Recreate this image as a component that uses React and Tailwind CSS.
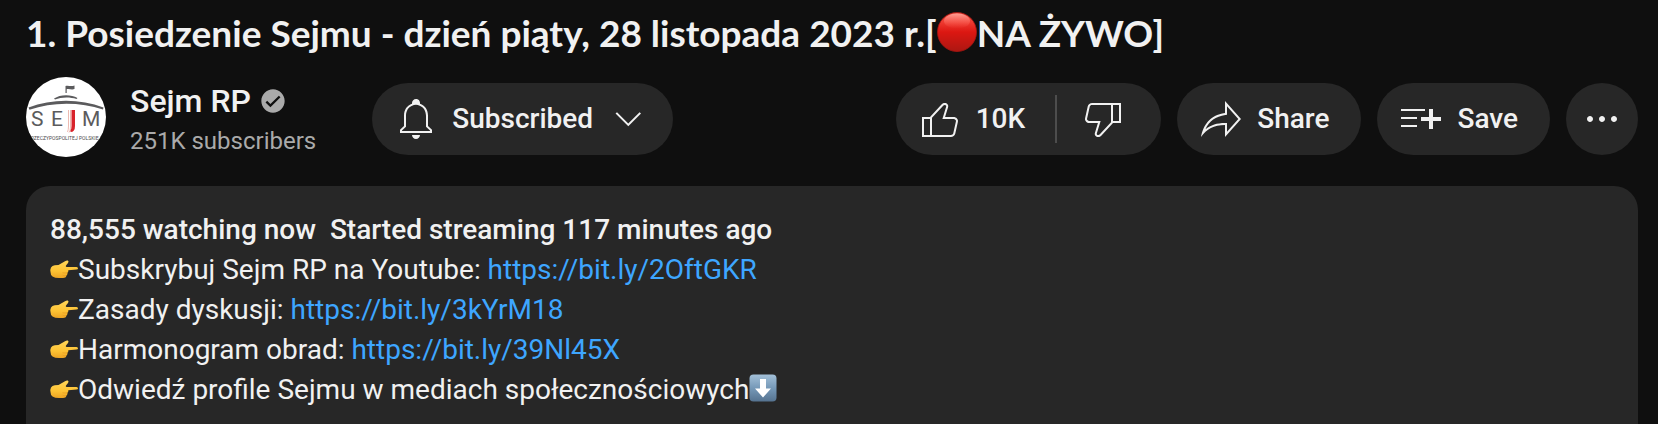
const LIKE = "M18.77,11h-4.23l1.52-4.94C16.38,5.03,15.54,4,14.38,4c-0.58,0-1.14,0.24-1.52,0.65L7,11H3v10h4h1h9.43c1.06,0,1.98-0.67,2.19-1.61l1.34-6C21.23,12.15,20.18,11,18.77,11z M7,20H4v-8h3V20z M19.98,13.17l-1.34,6C18.54,19.65,18.03,20,17.43,20H8v-8.61l5.6-6.06C13.79,5.12,14.08,5,14.38,5c0.26,0,0.5,0.11,0.63,0.3c0.07,0.1,0.15,0.26,0.09,0.47l-1.52,4.94L13.18,12h1.35h4.23c0.41,0,0.8,0.17,1.03,0.46C19.92,12.61,20.05,12.86,19.98,13.17z";
const DISLIKE = "M17,4h-1H6.57C5.5,4,4.59,4.67,4.38,5.61l-1.34,6C2.77,12.85,3.82,14,5.23,14h4.23l-1.52,4.94C7.62,19.97,8.46,21,9.62,21c0.58,0,1.14-0.24,1.52-0.65L17,14h4V4H17z M10.4,19.67C10.21,19.88,9.92,20,9.62,20c-0.26,0-0.5-0.11-0.63-0.3c-0.07-0.1-0.15-0.26-0.09-0.47l1.52-4.94l0.4-1.29H9.46H5.23c-0.41,0-0.8-0.17-1.03-0.46c-0.12-0.15-0.25-0.4-0.18-0.72l1.34-6C5.46,5.35,5.97,5,6.57,5H16v8.61L10.4,19.67z M20,13h-3V5h3V13z";
const SHARE = "M15,5.63L20.66,12L15,18.37V15v-1h-1c-3.96,0-7.14,1-9.75,3.09c1.84-4.07,5.11-6.4,9.89-7.1L15,9.86V9V5.63 M14,3v6C6.22,10.13,3.11,15.33,2,21c2.78-3.97,6.44-6,12-6v6l8-9L14,3z";
const SAVE = "M22,13h-4v4h-2v-4h-4v-2h4V7h2v4h4V13z M14,7H2v1h12V7z M2,12h8v-1H2V12z M2,16h8v-1H2V16z";
const MORE = "M7.5,12c0,0.83-0.67,1.5-1.5,1.5S4.5,12.83,4.5,12s0.67-1.5,1.5-1.5S7.5,11.17,7.5,12z M13.5,12c0,0.83-0.67,1.5-1.5,1.5s-1.5-0.67-1.5-1.5s0.67-1.5,1.5-1.5S13.5,11.17,13.5,12z M19.5,12c0,0.83-0.67,1.5-1.5,1.5s-1.5-0.67-1.5-1.5s0.67-1.5,1.5-1.5S19.5,11.17,19.5,12z";
const BELL = "M10,20h4c0,1.1-0.9,2-2,2S10,21.1,10,20z M20,17.35V19H4v-1.65l2-1.88v-5.15c0-2.92,1.56-5.22,4-5.98V3.96c0-1.42,1.49-2.5,2.99-1.76C13.64,2.52,14,3.23,14,3.96l0,0.39c2.44,0.75,4,3.06,4,5.98v5.15L20,17.35z M19,17.77l-2-1.88v-5.47c0-2.47-1.19-4.36-3.13-5.1c-1.26-0.53-2.64-0.5-3.84,0.03C8.15,6.11,7,7.99,7,10.42v5.47l-2,1.88V18h14V17.77z";
const CHEVRON = "M18,9.28l-6.35,6.35l-6.37-6.35l0.72-0.71l5.64,5.65l5.65-5.65z";
const VERIFIED = "M12,2C6.5,2,2,6.5,2,12c0,5.5,4.5,10,10,10s10-4.5,10-10C22,6.5,17.5,2,12,2z M9.8,17.3l-4.2-4.1L7,11.8l2.8,2.7L17,7.4l1.4,1.4L9.8,17.3z";

function Icon({ d, className = "size-12" }) {
  return (
    <svg viewBox="0 0 24 24" fill="currentColor" aria-hidden="true" className={`shrink-0 ${className}`}>
      <path d={d} />
    </svg>
  );
}

function Avatar() {
  return (
    <svg viewBox="0 0 80 80" className="size-20 shrink-0 rounded-full bg-white" role="img" aria-label="Sejm RP">
      <path d="M2.500 30.500C26 21.500 54 21.500 77.500 30.500L77 32.500C54 24.800 26 24.800 3.500 32.800z" fill="#5b5b5d" />
      <path d="M28 21.500C34 17.200 45 17 51.500 21L50.500 22C44 19.800 35 20 29 22.500z" fill="#5b5b5d" />
      <path d="M39.500 16V9c3-1 5 1 9-.4v3.400c-3 1.200-5-.5-7.800.2V16z" fill="#5b5b5d" />
      <g fontFamily="Roboto, sans-serif" fontSize="21" fill="#5b5b5d">
        <text x="5" y="49">S</text>
        <text x="25" y="49">E</text>
        <text x="56" y="49">M</text>
      </g>
      <path d="M42.500 33v16q0 4-1 6M44.500 33v17q0 4-1.500 5.500" stroke="#e9a9a0" strokeWidth=".8" fill="none" />
      <path d="M45.500 33H49v16q0 6-4.500 6v-2q1-1 1-4z" fill="#d8232a" />
      <text x="40" y="63" textAnchor="middle" fontFamily="Roboto, sans-serif" fontSize="5" fill="#4b4b4d">RZECZYPOSPOLITEJ POLSKIEJ</text>
    </svg>
  );
}

function RedCircle() {
  return (
    <svg viewBox="0 0 40 40" className="inline-block size-10 align-[-5px]" role="img" aria-label="🔴">
      <defs>
        <linearGradient id="red" x1="0" y1="0" x2="0" y2="1">
          <stop offset="0" stopColor="#f0554a" />
          <stop offset=".25" stopColor="#ee3a30" />
          <stop offset=".5" stopColor="#dc1712" />
          <stop offset="1" stopColor="#ac1712" />
        </linearGradient>
        <linearGradient id="shine" x1="0" y1="0" x2="0" y2="1">
          <stop offset="0" stopColor="#ff9d92" />
          <stop offset="1" stopColor="#ff5b50" stopOpacity="0" />
        </linearGradient>
      </defs>
      <circle cx="20" cy="20" r="19.500" fill="url(#red)" stroke="#a81510" strokeWidth=".8" />
      <ellipse cx="20" cy="9" rx="13" ry="7.500" fill="url(#shine)" />
    </svg>
  );
}

function PointingHand() {
  return (
    <svg viewBox="0 0 28 28" className="inline-block size-7 align-[-4px]" role="img" aria-label="👉">
      <defs>
        <linearGradient id="hand" x1="0" y1="0" x2="0" y2="1">
          <stop offset="0" stopColor="#ffd65a" />
          <stop offset=".6" stopColor="#fdc233" />
          <stop offset="1" stopColor="#eda423" />
        </linearGradient>
      </defs>
      <path d="M1 12.500Q0 14.500.5 17Q.5 20 2.500 21.500Q5 23 9 23H13Q16 23 16.500 20.500Q17.800 19.500 17.500 17.800Q18.700 16.500 18.300 15.200L26.500 14.600Q28 14.300 28 13.200Q28 12 26.500 11.900H16.500Q15.200 11.500 16 10.500L18 8Q19.200 6.300 17.800 5.600Q16.800 5.200 15 6.200L8.500 10Q4 10 2.500 11Z" fill="url(#hand)" />
      <path d="M17 17.900Q14.500 18.300 12.500 17.700M16 20.600Q14 20.900 12.500 20.300" fill="none" stroke="#e39a22" strokeWidth=".7" />
    </svg>
  );
}

function DownArrow() {
  return (
    <svg viewBox="0 0 28 28" className="inline-block size-7 align-[-3px]" role="img" aria-label="⬇️">
      <defs>
        <linearGradient id="blue" x1="0" y1="0" x2="0" y2="1">
          <stop offset="0" stopColor="#a3c0d8" />
          <stop offset=".5" stopColor="#7699b8" />
          <stop offset="1" stopColor="#557390" />
        </linearGradient>
      </defs>
      <rect x=".5" y=".5" width="27" height="27" rx="4" fill="url(#blue)" />
      <path d="M11 5h6v9.500h5L14 23.500 6 14.500h5z" fill="#fff" />
    </svg>
  );
}

const pill = "flex h-18 items-center rounded-full bg-[#272727] text-[28px] font-medium";

const links = [
  ["Subskrybuj Sejm RP na Youtube: ", "https://bit.ly/2OftGKR"],
  ["Zasady dyskusji: ", "https://bit.ly/3kYrM18"],
  ["Harmonogram obrad: ", "https://bit.ly/39Nl45X"],
];

export default function App() {
  return (
    <main className="flex min-h-screen flex-col bg-[#0f0f0f] pt-[5px] pr-5 pl-[26px] font-['Roboto',sans-serif] text-[#f1f1f1]">
      <h1 className="font-['Lato',sans-serif] text-[37px] leading-[56px] font-bold">
        1. Posiedzenie Sejmu - dzień piąty, 28 listopada 2023 r.[<RedCircle />NA ŻYWO]
      </h1>

      <div className="mt-4 flex items-center justify-between gap-4">
        <div className="flex items-center">
          <Avatar />
          <div className="ml-6 pt-1">
            <div className="flex items-center gap-2">
              <a href="#channel" className="text-[32px] leading-10 font-medium">Sejm RP</a>
              <Icon d={VERIFIED} className="size-7 text-[#aaa]" />
            </div>
            <p className="mt-1 text-2xl leading-8 text-[#aaa]">251K subscribers</p>
          </div>
          <button type="button" className={`${pill} mt-1 ml-14 px-5`}>
            <Icon d={BELL} />
            <span className="ml-3">Subscribed</span>
            <Icon d={CHEVRON} className="ml-3 size-12" />
          </button>
        </div>

        <div className="mt-1 flex items-center gap-4">
          <div className={pill}>
            <button type="button" className="flex h-full items-center gap-3 pr-[30px] pl-5">
              <Icon d={LIKE} />
              10K
            </button>
            <span className="h-12 w-0.5 bg-[#4d4d4d]" />
            <button type="button" aria-label="Dislike" className="flex h-full items-center pr-[34px] pl-[22px]">
              <Icon d={DISLIKE} />
            </button>
          </div>
          <button type="button" className={`${pill} gap-3 pr-8 pl-5`}>
            <Icon d={SHARE} />
            Share
          </button>
          <button type="button" className={`${pill} gap-3 pr-8 pl-5`}>
            <Icon d={SAVE} />
            Save
          </button>
          <button type="button" aria-label="More actions" className={`${pill} w-18 justify-center`}>
            <Icon d={MORE} />
          </button>
        </div>
      </div>

      <section className="mt-[29px] flex-1 rounded-t-3xl bg-[#272727] px-6 pt-6 text-[28px] leading-10">
        <p className="font-medium whitespace-pre-wrap">88,555 watching now  Started streaming 117 minutes ago</p>
        {links.map(([label, url]) => (
          <p key={url}>
            <PointingHand />
            {label}
            <a href={url} className="text-[#3ea6ff]">{url}</a>
          </p>
        ))}
        <p>
          <PointingHand />
          Odwiedź profile Sejmu w mediach społecznościowych
          <DownArrow />
        </p>
      </section>
    </main>
  );
}
